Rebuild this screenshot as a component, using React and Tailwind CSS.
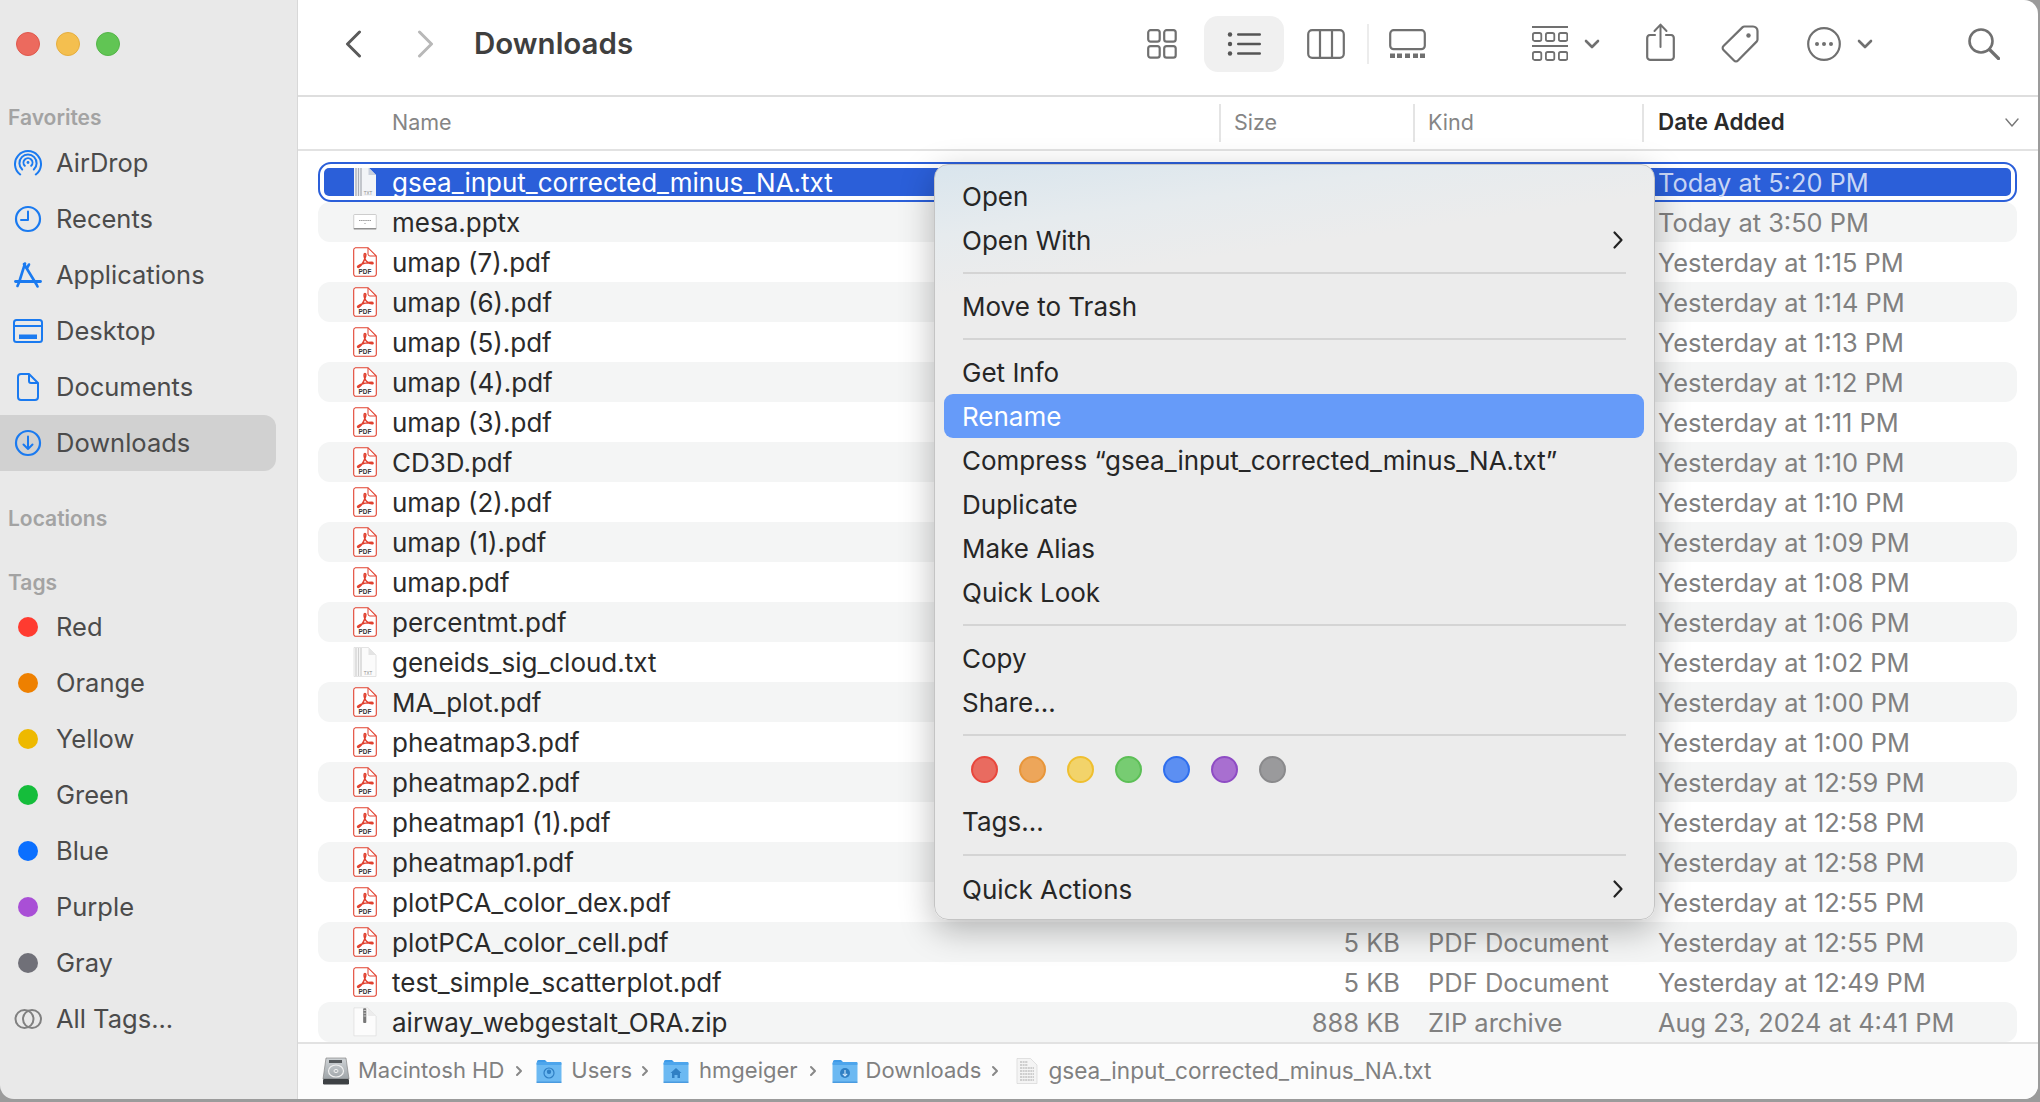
import React from "react";

const BLUE = "#1a7af0";

function AirDrop() {
  return (
    <svg width="28" height="28" viewBox="0 0 28 28" fill="none" stroke={BLUE} strokeWidth="2" strokeLinecap="round">
      <path d="M6.2 25.5A13 13 0 1 1 21.8 25.5" />
      <path d="M8.2 20.5A8.6 8.6 0 1 1 19.8 20.5" />
      <path d="M10.8 16.8A4.5 4.5 0 1 1 17.2 16.8" />
      <circle cx="14" cy="13.5" r="1.4" fill={BLUE} stroke="none" />
    </svg>
  );
}
function Recents() {
  return (
    <svg width="28" height="28" viewBox="0 0 28 28" fill="none" stroke={BLUE} strokeWidth="2.2" strokeLinecap="round" strokeLinejoin="round">
      <circle cx="14" cy="14" r="12" />
      <path d="M14 6.5V15H7" strokeWidth="2" />
    </svg>
  );
}
function Apps() {
  return (
    <svg width="28" height="26" viewBox="0 0 28 26" fill="none" stroke={BLUE} strokeWidth="2.6" strokeLinecap="round">
      <path d="M11 1.5L5 20.5M3.5 24L5 20.5" />
      <path d="M10 2L22.5 22.5L23.5 24.5" />
      <path d="M15 2.5L13 6" />
      <path d="M1.5 19.5H26.5" strokeWidth="2.8" />
    </svg>
  );
}
function Desktop() {
  return (
    <svg width="30" height="24" viewBox="0 0 30 24" fill="none" stroke={BLUE} strokeWidth="2">
      <rect x="1" y="1" width="28" height="22" rx="2.5" />
      <path d="M1 7H29" />
      <rect x="6" y="15.5" width="18" height="4.5" fill={BLUE} stroke="none" />
    </svg>
  );
}
function Docs() {
  return (
    <svg width="22" height="28" viewBox="0 0 22 28" fill="none" stroke={BLUE} strokeWidth="2" strokeLinejoin="round">
      <path d="M4 1H12L21 10V24A3 3 0 0 1 18 27H4A3 3 0 0 1 1 24V4A3 3 0 0 1 4 1Z" />
      <path d="M12 1V8A2 2 0 0 0 14 10H21" />
    </svg>
  );
}
function Down() {
  return (
    <svg width="28" height="28" viewBox="0 0 28 28" fill="none" stroke={BLUE} strokeWidth="2.2" strokeLinecap="round" strokeLinejoin="round">
      <circle cx="14" cy="14" r="12" />
      <path d="M14 7.5V20M9.5 15.5L14 20L18.5 15.5" strokeWidth="2" />
    </svg>
  );
}
function AllTags() {
  return (
    <svg width="28" height="22" viewBox="0 0 28 22" fill="none" stroke="#808080" strokeWidth="2">
      <circle cx="10.5" cy="11" r="9" />
      <circle cx="18" cy="11" r="9" />
    </svg>
  );
}

function GridIcon() {
  return (
    <svg width="30" height="30" viewBox="0 0 30 30" fill="none" stroke="#707070" strokeWidth="2.2">
      <rect x="1.2" y="1.2" width="11.5" height="11.5" rx="2.4" />
      <rect x="17.2" y="1.2" width="11.5" height="11.5" rx="2.4" />
      <rect x="1.2" y="17.2" width="11.5" height="11.5" rx="2.4" />
      <rect x="17.2" y="17.2" width="11.5" height="11.5" rx="2.4" />
    </svg>
  );
}
function ListIcon() {
  return (
    <svg width="34" height="24" viewBox="0 0 34 24" fill="#555">
      <circle cx="3" cy="2.5" r="2.2" />
      <circle cx="3" cy="12" r="2.2" />
      <circle cx="3" cy="21.5" r="2.2" />
      <rect x="10" y="1.3" width="24" height="2.4" rx="1.2" />
      <rect x="10" y="10.8" width="24" height="2.4" rx="1.2" />
      <rect x="10" y="20.3" width="24" height="2.4" rx="1.2" />
    </svg>
  );
}
function ColsIcon() {
  return (
    <svg width="38" height="30" viewBox="0 0 38 30" fill="none" stroke="#707070" strokeWidth="2.2">
      <rect x="1.2" y="1.2" width="35.6" height="27.6" rx="4" />
      <path d="M13 1V29M25 1V29" />
    </svg>
  );
}
function GalleryIcon() {
  return (
    <svg width="37" height="29" viewBox="0 0 37 29" fill="none" stroke="#707070" strokeWidth="2.2">
      <rect x="1.2" y="1.2" width="34.6" height="19" rx="3.5" />
      <g fill="#707070" stroke="none">
        <rect x="1" y="24.5" width="5" height="4.5" />
        <rect x="8" y="24.5" width="5" height="4.5" />
        <rect x="16" y="24.5" width="5" height="4.5" />
        <rect x="24" y="24.5" width="5" height="4.5" />
        <rect x="31" y="24.5" width="5" height="4.5" />
      </g>
    </svg>
  );
}
function GroupIcon() {
  const cells = [0, 13, 26];
  return (
    <svg width="36" height="35" viewBox="0 0 36 35" fill="none" stroke="#707070" strokeWidth="1.8">
      <path d="M0 1H36M0 20H36" strokeWidth="2" />
      {cells.map((x) => (
        <rect key={"a" + x} x={x + 0.9} y="7" width="8.4" height="8" rx="1.8" />
      ))}
      {cells.map((x) => (
        <rect key={"b" + x} x={x + 0.9} y="26" width="8.4" height="8" rx="1.8" />
      ))}
    </svg>
  );
}
function SmallChev() {
  return (
    <svg width="16" height="10" viewBox="0 0 16 10" fill="none" stroke="#707070" strokeWidth="2.6" strokeLinecap="round" strokeLinejoin="round">
      <path d="M2 2L8 8L14 2" />
    </svg>
  );
}
function ShareIcon() {
  return (
    <svg width="29" height="38" viewBox="0 0 29 38" fill="none" stroke="#707070" strokeWidth="2.2" strokeLinecap="round" strokeLinejoin="round">
      <path d="M9 12H4A3 3 0 0 0 1.2 15V33.5A3 3 0 0 0 4 36.8H25A3 3 0 0 0 27.8 33.5V15A3 3 0 0 0 25 12H20" />
      <path d="M14.5 24V2M8.5 8L14.5 1.6L20.5 8" strokeWidth="2" />
    </svg>
  );
}
function TagIcon() {
  return (
    <svg width="38" height="38" viewBox="0 0 38 38" fill="none" stroke="#707070" strokeWidth="2.2" strokeLinejoin="round">
      <path d="M23.5 1.5H32A4.5 4.5 0 0 1 36.5 6V14.5A3 3 0 0 1 35.6 16.6L17 35.5A2.8 2.8 0 0 1 13 35.5L2.5 25A2.8 2.8 0 0 1 2.5 21L21.4 2.4A3 3 0 0 1 23.5 1.5Z" />
      <circle cx="27.5" cy="10.5" r="2.2" fill="#707070" stroke="none" />
    </svg>
  );
}
function MoreIcon() {
  return (
    <svg width="34" height="34" viewBox="0 0 34 34" fill="none" stroke="#707070" strokeWidth="2.2">
      <circle cx="17" cy="17" r="15.8" />
      <g fill="#707070" stroke="none">
        <circle cx="10" cy="17" r="2" />
        <circle cx="17" cy="17" r="2" />
        <circle cx="24" cy="17" r="2" />
      </g>
    </svg>
  );
}
function SearchIcon() {
  return (
    <svg width="32" height="32" viewBox="0 0 32 32" fill="none" stroke="#707070" strokeWidth="2.6" strokeLinecap="round">
      <circle cx="13" cy="13" r="11.5" />
      <path d="M21.5 21.5L30.5 30.5" strokeWidth="3.2" />
    </svg>
  );
}

function PdfIcon() {
  return (
    <svg width="24" height="30" viewBox="0 0 24 30">
      <path d="M2.5 .7H15L23.3 9V27A2.2 2.2 0 0 1 21 29.3H2.9A2.2 2.2 0 0 1 .7 27V2.9A2.2 2.2 0 0 1 2.5 .7Z" fill="#fff" stroke="#e2412f" strokeWidth="1.1" />
      <path d="M15 .8V7A2 2 0 0 0 17 9H23" fill="none" stroke="#e2412f" strokeWidth="1" />
      <path d="M12 6.5C10.8 6.5 10.8 9 11.8 11.5C12.8 14 15 16.3 19 16.8C20.6 17 20.4 15.3 18.6 15.3C14.8 15.3 7.7 16.5 5 19C4 20 5 21 6.2 20C8.6 18 11.2 14.2 12.6 9.5C13 8 13 6.5 12 6.5Z" fill="none" stroke="#e2412f" strokeWidth="1.5" strokeLinejoin="round" />
      <text x="12" y="27" textAnchor="middle" fontSize="6.4" fontWeight="600" fill="#333" fontFamily="Liberation Sans, sans-serif">PDF</text>
    </svg>
  );
}
function TxtIcon({ selected }) {
  return (
    <svg width="24" height={selected ? 28 : 30} viewBox={selected ? "0 1 24 28" : "0 0 24 30"}>
      <path d="M1 .5H15.5L23 8V29.5H1Z" fill={selected ? "#f2f4f7" : "#fbfbfb"} stroke={selected ? "none" : "#dddddd"} strokeWidth="0.8" />
      <path d="M15.5 .5V8H23Z" fill={selected ? "#c9d0dc" : "#e4e4e4"} />
      <g stroke={selected ? "#a9aeb6" : "#d0d0d0"} strokeWidth="1.3">
        <path d="M3 1V29M5.5 1V29M8 1V29" />
      </g>
      <text x="15" y="27.5" textAnchor="middle" fontSize="4.5" fill="#8a8a8a" fontFamily="Liberation Sans, sans-serif">TXT</text>
    </svg>
  );
}
function SlideIcon() {
  return (
    <svg width="32" height="22" viewBox="0 0 32 22">
      <rect x="1" y="1" width="30" height="19" rx="1" fill="#fff" stroke="#bdbdbd" />
      <path d="M1 20H31" stroke="#8a8a8a" strokeWidth="1.8" />
      <path d="M8 9H24" stroke="#8c8c8c" strokeWidth="1.2" strokeDasharray="2 .8" />
      <path d="M15 13H17" stroke="#a0a0a0" strokeWidth="1" />
    </svg>
  );
}
function ZipIcon() {
  return (
    <svg width="26" height="32" viewBox="0 0 26 32">
      <path d="M1 .7H16L25 9.5V31H1Z" fill="#fcfcfc" stroke="#dedede" strokeWidth="0.8" />
      <path d="M16 .7V9.5H25Z" fill="#ececec" />
      <rect x="11" y="1" width="3.4" height="16" rx="1" fill="#777" />
      <path d="M11.5 3.5H14M11.5 6.5H14M11.5 9.5H14" stroke="#ddd" strokeWidth="0.9" />
    </svg>
  );
}
function HdIcon() {
  return (
    <svg width="28" height="28" viewBox="0 0 28 28">
      <defs>
        <linearGradient id="hdg" x1="0" y1="0" x2="0" y2="1">
          <stop offset="0" stopColor="#cfd3d6" />
          <stop offset="1" stopColor="#9fa5a9" />
        </linearGradient>
      </defs>
      <path d="M4 1H24L27 22H1Z" fill="url(#hdg)" stroke="#777" strokeWidth="0.6" />
      <rect x="1" y="22" width="26" height="5.5" rx="1.2" fill="#3d4144" />
      <rect x="7" y="3" width="13" height="3" fill="#55595c" />
      <ellipse cx="14" cy="14" rx="7.5" ry="6" fill="none" stroke="#f0f0f0" strokeWidth="1.2" />
      <ellipse cx="14" cy="14" rx="2" ry="1.6" fill="none" stroke="#f0f0f0" strokeWidth="1" />
    </svg>
  );
}
function FolderIcon({ kind }) {
  return (
    <svg width="26" height="26" viewBox="0 0 26 26">
      <path d="M1 3.5A1.5 1.5 0 0 1 2.5 2H9L11.5 4.5H1Z" fill="#3f9be8" />
      <rect x="0.5" y="4" width="25" height="21" rx="2" fill="#6cb9f2" />
      <rect x="0.5" y="4" width="25" height="3" rx="1" fill="#4da5ec" />
      <rect x="0.5" y="23.5" width="25" height="1.5" fill="#4a9be0" />
      {kind === "user" && (
        <g fill="none" stroke="#2f7fc4" strokeWidth="1.2">
          <circle cx="13" cy="15" r="5" />
          <circle cx="13" cy="13.8" r="1.6" fill="#2f7fc4" />
        </g>
      )}
      {kind === "home" && <path d="M13 10L18.5 15H17V20H14.5V17H11.5V20H9V15H7.5Z" fill="#2f7fc4" />}
      {kind === "down" && (
        <g>
          <circle cx="13" cy="15" r="5" fill="#2f7fc4" />
          <path d="M13 12V18M10.8 15.8L13 18L15.2 15.8" stroke="#cfe7fb" strokeWidth="1.1" fill="none" />
        </g>
      )}
    </svg>
  );
}
function SmallDoc() {
  return (
    <svg width="22" height="26" viewBox="0 0 22 26">
      <path d="M1 .5H14.5L21 7V25.5H1Z" fill="#f4f4f4" stroke="#d5d5d5" strokeWidth="0.7" />
      <g stroke="#a8a8a8" strokeWidth="1">
        <path d="M4 4H12M4 7H12M4 10H18M4 13H18M4 16H18M4 19H18M4 22H18" strokeDasharray="2 .6" />
      </g>
    </svg>
  );
}
function Crumb() {
  return (
    <svg width="10" height="14" viewBox="0 0 10 14" fill="none" stroke="#888" strokeWidth="2" strokeLinecap="round" strokeLinejoin="round">
      <path d="M3 3L7 7L3 11" />
    </svg>
  );
}
function MenuChev() {
  return (
    <svg width="12" height="20" viewBox="0 0 12 20" fill="none" stroke="#222" strokeWidth="2.2" strokeLinecap="round" strokeLinejoin="round">
      <path d="M2.5 2.5L9.5 10L2.5 17.5" />
    </svg>
  );
}

const favorites = [
  ["AirDrop", <AirDrop />],
  ["Recents", <Recents />],
  ["Applications", <Apps />],
  ["Desktop", <Desktop />],
  ["Documents", <Docs />],
  ["Downloads", <Down />],
];

const tags = [
  ["Red", "bg-[#ff3b30]"],
  ["Orange", "bg-[#ee8000]"],
  ["Yellow", "bg-[#eeb900]"],
  ["Green", "bg-[#15bd3b]"],
  ["Blue", "bg-[#0a6fff]"],
  ["Purple", "bg-[#a94fd6]"],
  ["Gray", "bg-[#707078]"],
];

const rows = [
  ["gsea_input_corrected_minus_NA.txt", "txt", "", "", "Today at 5:20 PM"],
  ["mesa.pptx", "slide", "", "", "Today at 3:50 PM"],
  ["umap (7).pdf", "pdf", "", "", "Yesterday at 1:15 PM"],
  ["umap (6).pdf", "pdf", "", "", "Yesterday at 1:14 PM"],
  ["umap (5).pdf", "pdf", "", "", "Yesterday at 1:13 PM"],
  ["umap (4).pdf", "pdf", "", "", "Yesterday at 1:12 PM"],
  ["umap (3).pdf", "pdf", "", "", "Yesterday at 1:11 PM"],
  ["CD3D.pdf", "pdf", "", "", "Yesterday at 1:10 PM"],
  ["umap (2).pdf", "pdf", "", "", "Yesterday at 1:10 PM"],
  ["umap (1).pdf", "pdf", "", "", "Yesterday at 1:09 PM"],
  ["umap.pdf", "pdf", "", "", "Yesterday at 1:08 PM"],
  ["percentmt.pdf", "pdf", "", "", "Yesterday at 1:06 PM"],
  ["geneids_sig_cloud.txt", "txt", "", "", "Yesterday at 1:02 PM"],
  ["MA_plot.pdf", "pdf", "", "", "Yesterday at 1:00 PM"],
  ["pheatmap3.pdf", "pdf", "", "", "Yesterday at 1:00 PM"],
  ["pheatmap2.pdf", "pdf", "", "", "Yesterday at 12:59 PM"],
  ["pheatmap1 (1).pdf", "pdf", "", "", "Yesterday at 12:58 PM"],
  ["pheatmap1.pdf", "pdf", "", "", "Yesterday at 12:58 PM"],
  ["plotPCA_color_dex.pdf", "pdf", "", "", "Yesterday at 12:55 PM"],
  ["plotPCA_color_cell.pdf", "pdf", "5 KB", "PDF Document", "Yesterday at 12:55 PM"],
  ["test_simple_scatterplot.pdf", "pdf", "5 KB", "PDF Document", "Yesterday at 12:49 PM"],
  ["airway_webgestalt_ORA.zip", "zip", "888 KB", "ZIP archive", "Aug 23, 2024 at 4:41 PM"],
];

function FileIcon({ type, selected }) {
  if (type === "pdf") return <PdfIcon />;
  if (type === "txt") return <TxtIcon selected={selected} />;
  if (type === "slide") return <SlideIcon />;
  return <ZipIcon />;
}

function Row({ row, index }) {
  const [name, type, size, kind, date] = row;
  const selected = index === 0;
  const cells = (
    <>
      <div className={`flex items-center ${selected ? "w-[895px] pl-[29px]" : "w-[901px] pl-[35px]"}`}>
        <div className="flex w-[24px] justify-center">
          <FileIcon type={type} selected={selected} />
        </div>
        <span className={`ml-[15px] pt-[2px] text-[26px] leading-[26px] ${selected ? "text-white" : "text-[#2b2b2b]"}`}>{name}</span>
      </div>
      <div className="w-[181px] pt-[2px] text-right leading-[26px] text-[#808080]">{size}</div>
      <div className="ml-[28px] w-[230px] pt-[2px] leading-[26px] text-[#808080]">{kind}</div>
      <div className={`pt-[2px] text-[25.4px] leading-[26px] ${selected ? "text-[#c9d6f5]" : "text-[#808080]"}`}>{date}</div>
    </>
  );
  if (selected) {
    return (
      <div className="h-[40px] rounded-[13px] border-[2px] border-[#2b5fd9] bg-white px-[4px] py-[4px]">
        <div className="flex h-[28px] items-center rounded-[5px] bg-[#2b5fd9]">{cells}</div>
      </div>
    );
  }
  return <div className={`flex h-[40px] items-center rounded-[12px] ${index % 2 ? "bg-[#f4f5f5]" : ""}`}>{cells}</div>;
}

function MenuItem({ children, chevron, active }) {
  return (
    <div className={`ml-[9px] mr-[10px] flex h-[44px] items-center justify-between rounded-[9px] pl-[18px] pr-[20px] ${active ? "bg-[#669bf9] text-white" : "text-[#262626]"}`}>
      <span className="pt-[1px]">{children}</span>
      {chevron && <MenuChev />}
    </div>
  );
}

function Sep({ h = "h-[22px]" }) {
  return (
    <div className={`mx-[28px] flex items-center ${h}`}>
      <div className="h-[2px] w-full bg-[#d4d4d4]" />
    </div>
  );
}

const menuDots = [
  "bg-[#e96b60] border-[#e8473d]",
  "bg-[#eda65a] border-[#e8963a]",
  "bg-[#f2d36a] border-[#efbf30]",
  "bg-[#77cc72] border-[#5cbf56]",
  "bg-[#5c8ff2] border-[#2f6fee]",
  "bg-[#a86fd0] border-[#8e4cc4]",
  "bg-[#9a9a9c] border-[#8a8a8c]",
];

function Menu() {
  return (
    <div className="absolute left-[934px] top-[164px] w-[721px] rounded-[14px] border border-[#c4c4c4] bg-[linear-gradient(172deg,#d9e5ed_0px,#e6ebee_70px,#ececec_130px)] pb-[8px] pt-[9px] text-[26px] leading-[32px] shadow-[0_10px_34px_rgba(0,0,0,0.28)]">
      <MenuItem>Open</MenuItem>
      <MenuItem chevron>Open With</MenuItem>
      <Sep />
      <MenuItem>Move to Trash</MenuItem>
      <Sep />
      <MenuItem>Get Info</MenuItem>
      <MenuItem active>Rename</MenuItem>
      <MenuItem>Compress “gsea_input_corrected_minus_NA.txt”</MenuItem>
      <MenuItem>Duplicate</MenuItem>
      <MenuItem>Make Alias</MenuItem>
      <MenuItem>Quick Look</MenuItem>
      <Sep />
      <MenuItem>Copy</MenuItem>
      <MenuItem>Share...</MenuItem>
      <Sep />
      <div className="flex h-[53px] items-start gap-[21px] pl-[36px] pt-[10px]">
        {menuDots.map((c) => (
          <div key={c} className={`h-[27px] w-[27px] rounded-full border-2 ${c}`} />
        ))}
      </div>
      <MenuItem>Tags...</MenuItem>
      <Sep h="h-[24px]" />
      <MenuItem chevron>Quick Actions</MenuItem>
    </div>
  );
}

function SectionTitle({ children, className }) {
  return <div className={`flex h-[36px] items-center pl-[8px] text-[21px] font-semibold text-[#a3a3a3] ${className}`}>{children}</div>;
}

function Sidebar() {
  return (
    <aside className="flex w-[298px] shrink-0 flex-col border-r border-[#d8d8d8] bg-[#e9e9e9] text-[25.5px] leading-[32px] text-[#4b4b4b]">
      <div className="flex h-[99px] gap-[16px] pl-[16px] pt-[32px]">
        <div className="h-[24px] w-[24px] rounded-full border border-[#e0584c] bg-[#ec6a5e]" />
        <div className="h-[24px] w-[24px] rounded-full border border-[#e6ae3e] bg-[#f4bf4f]" />
        <div className="h-[24px] w-[24px] rounded-full border border-[#54b548] bg-[#61c554]" />
      </div>
      <SectionTitle className="pt-[2px]">Favorites</SectionTitle>
      {favorites.map(([label, icon]) => (
        <div key={label} className={`flex h-[56px] w-[276px] items-center rounded-r-[12px] ${label === "Downloads" ? "bg-[#d1d1d1]" : ""}`}>
          <div className="flex w-[56px] justify-center">{icon}</div>
          <span>{label}</span>
        </div>
      ))}
      <SectionTitle className="mt-[30px]">Locations</SectionTitle>
      <SectionTitle className="-mb-[2px] mt-[28px]">Tags</SectionTitle>
      {tags.map(([label, dot]) => (
        <div key={label} className="flex h-[56px] items-center">
          <div className="flex w-[56px] justify-center">
            <div className={`h-[20px] w-[20px] rounded-full ${dot}`} />
          </div>
          <span>{label}</span>
        </div>
      ))}
      <div className="flex h-[56px] items-center">
        <div className="flex w-[56px] justify-center">
          <AllTags />
        </div>
        <span>All Tags...</span>
      </div>
    </aside>
  );
}

function Toolbar() {
  return (
    <div className="flex h-[97px] shrink-0 items-center border-b-2 border-[#dedede] pb-[8px] pr-[38px]">
      <svg className="ml-[47px]" width="17" height="28" viewBox="0 0 17 28" fill="none" stroke="#5a5a5a" strokeWidth="3" strokeLinecap="round" strokeLinejoin="round">
        <path d="M14.5 2L2.5 14L14.5 26" />
      </svg>
      <svg className="ml-[55px]" width="17" height="28" viewBox="0 0 17 28" fill="none" stroke="#b8b8b8" strokeWidth="3" strokeLinecap="round" strokeLinejoin="round">
        <path d="M2.5 2L14.5 14L2.5 26" />
      </svg>
      <h1 className="ml-[40px] text-[29.5px] font-semibold text-[#3f3f3f]">Downloads</h1>
      <div className="flex-1" />
      <GridIcon />
      <div className="ml-[27px] flex h-[56px] w-[80px] items-center justify-center rounded-[14px] bg-[#f0f0f0]">
        <ListIcon />
      </div>
      <div className="ml-[23px]"><ColsIcon /></div>
      <div className="ml-[22px] h-[40px] w-[2px] bg-[#ececec]" />
      <div className="ml-[20px]"><GalleryIcon /></div>
      <div className="ml-[106px]"><GroupIcon /></div>
      <div className="ml-[16px]"><SmallChev /></div>
      <div className="ml-[46px] -mt-[4px]"><ShareIcon /></div>
      <div className="ml-[46px]"><TagIcon /></div>
      <div className="ml-[48px]"><MoreIcon /></div>
      <div className="ml-[16px]"><SmallChev /></div>
      <div className="ml-[95px]"><SearchIcon /></div>
    </div>
  );
}

function HeaderRow() {
  const cell = "flex h-[38px] items-center border-l-2 border-[#e4e4e4] pl-[13px]";
  return (
    <div className="flex h-[54px] shrink-0 items-center border-b-2 border-[#e2e2e2] text-[21.5px] text-[#858585]">
      <div className="w-[921px] pb-[2px] pl-[94px]">Name</div>
      <div className={`${cell} w-[194px] pb-[2px]`}>Size</div>
      <div className={`${cell} w-[229px] pb-[2px]`}>Kind</div>
      <div className={`${cell} flex-1 justify-between pb-[2px] pl-[14px] pr-[19px] text-[22.4px] font-semibold text-[#2a2a2a]`}>
        <span>Date Added</span>
        <svg width="14" height="9" viewBox="0 0 14 9" fill="none" stroke="#777" strokeWidth="1.4" strokeLinecap="round" strokeLinejoin="round">
          <path d="M1 1L7 8L13 1" />
        </svg>
      </div>
    </div>
  );
}

function Crumbs() {
  return (
    <div className="flex h-[57px] shrink-0 items-center border-t-2 border-[#e2e2e2] bg-[#fcfcfc] pb-[2px] pl-[24px] text-[22px] text-[#808080]">
      <HdIcon />
      <span className="ml-[8px]">Macintosh HD</span>
      <span className="ml-[10px]"><Crumb /></span>
      <span className="ml-[12px]"><FolderIcon kind="user" /></span>
      <span className="ml-[9px]">Users</span>
      <span className="ml-[8px]"><Crumb /></span>
      <span className="ml-[13px]"><FolderIcon kind="home" /></span>
      <span className="ml-[10px]">hmgeiger</span>
      <span className="ml-[10px]"><Crumb /></span>
      <span className="ml-[14px]"><FolderIcon kind="down" /></span>
      <span className="ml-[8px]">Downloads</span>
      <span className="ml-[9px]"><Crumb /></span>
      <span className="ml-[16px]"><SmallDoc /></span>
      <span className="ml-[10px] text-[22.6px]">gsea_input_corrected_minus_NA.txt</span>
    </div>
  );
}

export default function App() {
  return (
    <div className="h-[1102px] w-[2040px] overflow-hidden bg-[#9b9b9b] font-[Inter,sans-serif]">
      <div className="relative flex h-[1099px] w-[2038px] rounded-b-[14px] rounded-tr-[14px]">
        <div className="flex h-full w-full overflow-hidden rounded-b-[14px] rounded-tr-[14px]">
          <Sidebar />
          <main className="flex min-w-0 flex-1 flex-col bg-white">
            <Toolbar />
            <HeaderRow />
            <div className="flex-1 overflow-hidden pl-[20px] pr-[21px] pt-[11px] text-[25.5px]">
              {rows.map((r, i) => (
                <Row key={r[0]} row={r} index={i} />
              ))}
            </div>
            <Crumbs />
          </main>
        </div>
        <Menu />
      </div>
    </div>
  );
}
